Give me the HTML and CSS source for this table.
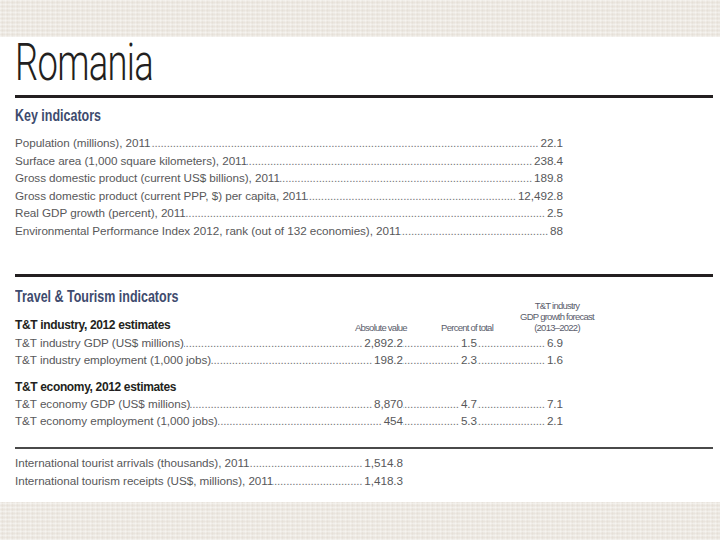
FILE: index.html
```html
<!DOCTYPE html>
<html>
<head>
<meta charset="utf-8">
<link rel="stylesheet" href="styles.css">
</head>
<body>
<div class="page">
  <div class="band top"></div>
  <main class="sheet">
    <h1 class="title"><span>Romania</span></h1>
    <div class="rule thick"></div>
    <h2 class="sec"><span>Key indicators</span></h2>
    <div class="list key">
      <div class="row"><span class="lab">Population (millions), 2011</span><span class="dots"></span><span class="val">22.1</span></div>
      <div class="row"><span class="lab">Surface area (1,000 square kilometers), 2011</span><span class="dots"></span><span class="val">238.4</span></div>
      <div class="row"><span class="lab">Gross domestic product (current US$ billions), 2011</span><span class="dots"></span><span class="val">189.8</span></div>
      <div class="row"><span class="lab">Gross domestic product (current PPP, $) per capita, 2011</span><span class="dots"></span><span class="val">12,492.8</span></div>
      <div class="row"><span class="lab">Real GDP growth (percent), 2011</span><span class="dots"></span><span class="val">2.5</span></div>
      <div class="row"><span class="lab">Environmental Performance Index 2012, rank (out of 132 economies), 2011</span><span class="dots"></span><span class="val">88</span></div>
    </div>
    <div class="rule thick second"></div>
    <h2 class="sec tt"><span>Travel &amp; Tourism indicators</span></h2>
    <div class="thead">
      <span class="grp">T&amp;T industry, 2012 estimates</span>
      <span class="hc h-abs">Absolute value</span>
      <span class="hc h-pct">Percent of total</span>
      <span class="hc h-fc">T&amp;T industry<br>GDP growth forecast<br>(2013–2022)</span>
    </div>
    <div class="trow">
      <div class="seg s1"><span class="lab">T&amp;T industry GDP (US$ millions)</span><span class="dots"></span><span class="val">2,892.2</span></div>
      <div class="seg s2"><span class="dots"></span><span class="val">1.5</span></div>
      <div class="seg s3"><span class="dots"></span><span class="val">6.9</span></div>
    </div>
    <div class="trow">
      <div class="seg s1"><span class="lab">T&amp;T industry employment (1,000 jobs)</span><span class="dots"></span><span class="val">198.2</span></div>
      <div class="seg s2"><span class="dots"></span><span class="val">2.3</span></div>
      <div class="seg s3"><span class="dots"></span><span class="val">1.6</span></div>
    </div>
    <div class="grp grp2">T&amp;T economy, 2012 estimates</div>
    <div class="trow">
      <div class="seg s1"><span class="lab">T&amp;T economy GDP (US$ millions)</span><span class="dots"></span><span class="val">8,870</span></div>
      <div class="seg s2"><span class="dots"></span><span class="val">4.7</span></div>
      <div class="seg s3"><span class="dots"></span><span class="val">7.1</span></div>
    </div>
    <div class="trow">
      <div class="seg s1"><span class="lab">T&amp;T economy employment (1,000 jobs)</span><span class="dots"></span><span class="val">454</span></div>
      <div class="seg s2"><span class="dots"></span><span class="val">5.3</span></div>
      <div class="seg s3"><span class="dots"></span><span class="val">2.1</span></div>
    </div>
    <div class="rule thin"></div>
    <div class="list intl">
      <div class="row"><span class="lab">International tourist arrivals (thousands), 2011</span><span class="dots"></span><span class="val">1,514.8</span></div>
      <div class="row"><span class="lab">International tourism receipts (US$, millions), 2011</span><span class="dots"></span><span class="val">1,418.3</span></div>
    </div>
  </main>
  <div class="band bottom"></div>
</div>
</body>
</html>
```
FILE: styles.css
```css
* { box-sizing: border-box; }
html, body { margin: 0; padding: 0; }
body { width: 720px; height: 540px; overflow: hidden; font-family: "Liberation Sans", Arial, sans-serif; }

.page { display: flex; flex-direction: column; height: 540px; }
.band {
  flex: none;
  background-color: #ede9e3;
  background-image:
    repeating-linear-gradient(0deg, rgba(255,255,255,.3) 0 1px, transparent 1px 2px, rgba(215,205,192,.18) 2px 3px, transparent 3px 4px),
    repeating-linear-gradient(90deg, rgba(255,255,255,.25) 0 1px, transparent 1px 2px, rgba(210,200,188,.16) 2px 3px, transparent 3px 5px);
}
.band.top { height: 37px; }
.band.bottom { height: 38px; }
.sheet {
  height: 465px;
  background: #fff;
  padding: 0 7px 0 15px;
  display: flex;
  flex-direction: column;
}

.title {
  margin: 0;
  height: 58px;
  font-family: Roboto, "Liberation Sans", sans-serif;
  font-weight: 300;
  font-size: 52px;
  line-height: 52px;
  color: #231f20;
}
.title span { display: inline-block; transform: scaleX(0.7); transform-origin: 0 0; letter-spacing: -1px; }

.rule.thick { height: 3px; background: #231f20; flex: none; }
.rule.second { margin-top: 35px; }
.rule.thin { height: 2px; background: #4a4a4a; margin-top: 18px; flex: none; }

.sec {
  margin: 0;
  font-family: "Liberation Sans", Arial, sans-serif;
  font-weight: bold;
  font-size: 16px;
  line-height: 20px;
  color: #3e4b6e;
  padding-top: 8px;
  height: 36px;
  flex: none;
}
.sec span { display: inline-block; transform: scaleX(0.78); transform-origin: 0 0; }
.sec.tt { height: 23px; padding-top: 10px; }

.list { display: flex; flex-direction: column; }
.key { width: 548px; }
.intl { width: 388px; margin-top: 5px; }

.row, .seg {
  display: flex;
  align-items: baseline;
  font-size: 11.7px;
  line-height: 17.5px;
  color: #58585a;
  white-space: nowrap;
  letter-spacing: -0.05px;
}
.trow .seg { line-height: 17px; }
.lab { flex: none; }
.val { flex: none; }
.dots {
  flex: 1;
  overflow: hidden;
  direction: rtl;
  padding: 0 2px 0 3px;
  letter-spacing: -0.2px;
  min-width: 0;
  color: #77777a;
}
.dots::before { content: "........................................................................................................................................................................................................................"; }

.thead {
  display: flex;
  align-items: flex-end;
  margin-top: 0;
  color: #58585a;
}
.grp {
  font-weight: bold;
  font-size: 12px;
  line-height: 16px;
  color: #231f20;
  letter-spacing: -0.35px;
  white-space: nowrap;
}
.thead .grp { width: 340px; flex: none; padding-bottom: 1px; }
.grp2 { margin-top: 11px; }
.hc {
  font-size: 9.5px;
  line-height: 11px;
  letter-spacing: -0.75px;
  white-space: nowrap;
  flex: none;
  color: #5a5d6c;
  padding-bottom: 1px;
}
.h-abs { width: 55px; }
.h-pct { width: 83px; text-align: right; }
.h-fc { width: 128px; text-align: center; }

.trow { display: flex; }
.s1 { width: 388px; }
.s2 { width: 74px; }
.s3 { width: 86px; }
```
